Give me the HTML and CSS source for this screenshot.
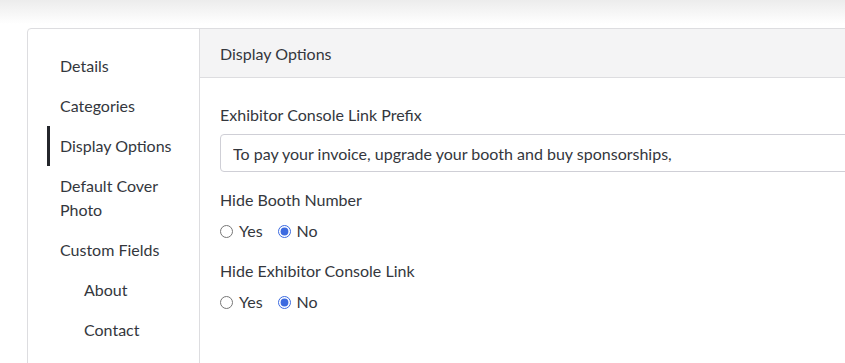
FILE: index.html
```html
<!DOCTYPE html>
<html lang="en">
<head>
    <meta charset="UTF-8">
    <meta name="viewport" content="width=device-width, initial-scale=1.0">
    <title>Display Options</title>
    <link rel="stylesheet" href="styles.css">
</head>
<body>
    <div class="page">
        <div class="card">
            <ul class="side-nav">
                <li><a href="#">Details</a></li>
                <li><a href="#">Categories</a></li>
                <li class="active"><a href="#">Display Options</a></li>
                <li><a href="#">Default Cover Photo</a></li>
                <li><a href="#">Custom Fields</a></li>
                <li class="sub"><a href="#">About</a></li>
                <li class="sub"><a href="#">Contact</a></li>
            </ul>
            <div class="panel">
                <div class="panel-header">Display Options</div>
                <div class="panel-body">
                    <div class="field">
                        <label class="field-label" for="prefix">Exhibitor Console Link Prefix</label>
                        <input class="text-input" type="text" id="prefix" value="To pay your invoice, upgrade your booth and buy sponsorships,">
                    </div>
                    <div class="field">
                        <div class="field-label">Hide Booth Number</div>
                        <div class="radios">
                            <label><input type="radio" name="booth"> Yes</label>
                            <label><input type="radio" name="booth" checked> No</label>
                        </div>
                    </div>
                    <div class="field">
                        <div class="field-label">Hide Exhibitor Console Link</div>
                        <div class="radios">
                            <label><input type="radio" name="console"> Yes</label>
                            <label><input type="radio" name="console" checked> No</label>
                        </div>
                    </div>
                </div>
            </div>
        </div>
    </div>
</body>
</html>
```

FILE: styles.css
```css
html, body {
    margin: 0;
    height: 100%;
}
body {
    font-family: Lato, "Open Sans", sans-serif;
    font-size: 16px;
    line-height: 24px;
    color: #34373d;
    background: linear-gradient(#ececec, #ffffff 24px);
    overflow: hidden;
}
.page {
    padding: 28px 0 0 27px;
}
.card {
    display: flex;
    width: 900px;
    height: 400px;
    border: 1px solid #dddde0;
    border-radius: 4px 0 0 0;
    background-color: #fff;
}
.side-nav {
    list-style: none;
    margin: 0;
    padding: 17px 20px 0 19px;
    width: 132px;
    flex-shrink: 0;
    border-right: 1px solid #dddde0;
}
.side-nav li {
    padding: 8px 0 8px 10px;
    border-left: 3px solid transparent;
}
.side-nav li.active {
    border-left-color: #24262b;
}
.side-nav li.sub {
    padding-left: 34px;
}
.side-nav a {
    color: #34373d;
    text-decoration: none;
}
.panel {
    flex: 1;
}
.panel-header {
    height: 48px;
    line-height: 50px;
    padding: 0 20px;
    background-color: #f4f4f5;
    border-bottom: 1px solid #dddde0;
}
.panel-body {
    padding: 25px 0 0 20px;
}
.field {
    margin-bottom: 16px;
}
.field-label {
    display: block;
    margin-bottom: 7px;
}
.text-input {
    display: block;
    box-sizing: border-box;
    width: 700px;
    height: 38px;
    margin-bottom: 2px;
    padding: 0 12px;
    border: 1px solid #cfcfd6;
    border-radius: 4px;
    font-family: inherit;
    font-size: 16px;
    color: #34373d;
}
.radios {
    display: flex;
    gap: 15px;
    margin-top: 3px;
}
.radios label {
    display: flex;
    align-items: center;
    gap: 6px;
}
.radios input {
    margin: 0;
    width: 13px;
    height: 13px;
    accent-color: #3c6ae0;
}
```
